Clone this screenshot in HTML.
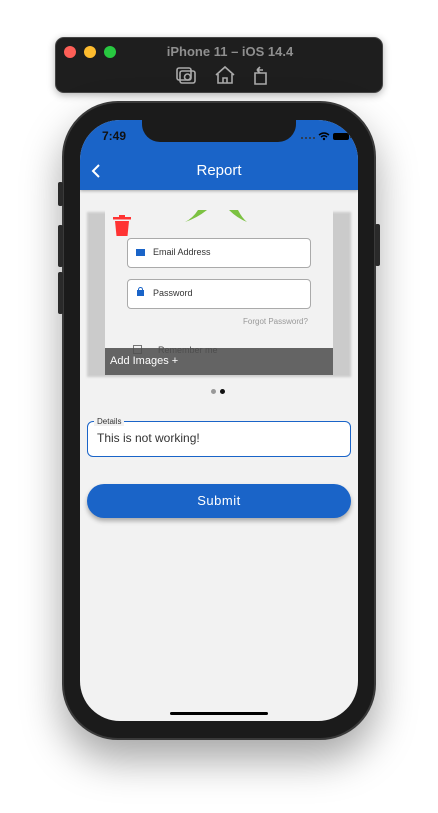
<!DOCTYPE html>
<html><head><style>
*{margin:0;padding:0;box-sizing:border-box}
body{width:438px;height:813px;background:#fff;position:relative;overflow:hidden;font-family:"Liberation Sans",sans-serif}
.abs{position:absolute}
</style></head><body>
<div class="abs" style="left:55px;top:37px;width:328px;height:56px;background:#1e1e1e;border-radius:9px;border:1px solid #444;box-shadow:0 2px 8px rgba(0,0,0,.3)"></div>
<div class="abs" style="left:64px;top:46px;width:12px;height:12px;border-radius:50%;background:#fe5f57"></div>
<div class="abs" style="left:84px;top:46px;width:12px;height:12px;border-radius:50%;background:#febc2e"></div>
<div class="abs" style="left:104px;top:46px;width:12px;height:12px;border-radius:50%;background:#28c840"></div>
<div class="abs" style="left:120px;top:43px;width:220px;text-align:center;color:#8f8f8f;font-size:13px;font-weight:bold;line-height:18px">iPhone 11 – iOS 14.4</div>
<svg class="abs" style="left:175px;top:65px" width="100" height="20" fill="none" stroke="#aaa" stroke-width="1.6">
<rect x="2" y="3" width="14" height="12" rx="2"/><rect x="5" y="6" width="15" height="12" rx="2"/><circle cx="12.5" cy="12" r="3"/>
<path d="M41 10 L50 2 L59 10 M43 9 V18 H57 V9 M48 18 V13 H52 V18"/>
<path d="M80 8 H91 V19 H80 Z M82 5 L85 2 M82 5 L85 8 M82 5 H88"/>
</svg>
<div class="abs" style="left:62px;top:101px;width:314px;height:639px;background:#1b1b1b;border-radius:56px;border:2px solid #3a3a3a;box-shadow:0 20px 40px rgba(0,0,0,.35)"></div>
<div class="abs" style="left:58px;top:182px;width:5px;height:24px;background:#2a2a2a;border-radius:2px"></div>
<div class="abs" style="left:58px;top:225px;width:5px;height:42px;background:#2a2a2a;border-radius:2px"></div>
<div class="abs" style="left:58px;top:272px;width:5px;height:42px;background:#2a2a2a;border-radius:2px"></div>
<div class="abs" style="left:375px;top:224px;width:5px;height:42px;background:#2a2a2a;border-radius:2px"></div>
<div class="abs" style="left:80px;top:120px;width:278px;height:601px;background:#f2f2f2;border-radius:40px;overflow:hidden">
  <div class="abs" style="left:0;top:0;width:278px;height:70px;background:#1a64c8;box-shadow:0 1px 3px rgba(0,0,0,.3)"></div>
  <div class="abs" style="left:62px;top:0;width:154px;height:22px;background:#1b1b1b;border-radius:0 0 18px 18px"></div>
  <div class="abs" style="left:22px;top:9px;font-size:12px;font-weight:bold;color:#111">7:49</div>
  <svg class="abs" style="left:220px;top:11px" width="52" height="10"><g fill="#333"><circle cx="2" cy="7" r="1"/><circle cx="6" cy="7" r="1"/><circle cx="10" cy="7" r="1"/><circle cx="14" cy="7" r="1"/></g>
  <path d="M19 4 Q24 0 29 4 M21 6 Q24 3.5 27 6" stroke="#000" stroke-width="1.5" fill="none"/><circle cx="24" cy="8" r="1.2"/>
  <rect x="33" y="2" width="16" height="7" rx="2" fill="#000"/><rect x="50" y="4" width="1.5" height="3" fill="#333"/></svg>
  <svg class="abs" style="left:11px;top:43px" width="10" height="16"><path d="M8 2 L2 8 L8 14" stroke="#fff" stroke-width="2" fill="none"/></svg>
  <div class="abs" style="left:0;top:42px;width:278px;text-align:center;color:#fff;font-size:15px">Report</div>
  <div class="abs" style="left:7px;top:92px;width:264px;height:165px;background:#cbcbcb;filter:blur(1px)"></div>
  <div class="abs" style="left:25px;top:90px;width:228px;height:165px;background:#f2f2f2;overflow:hidden">
    <svg class="abs" style="left:78px;top:0" width="70" height="14"><path d="M2 12 Q14 8 24 0 L15 0 Q10 8 2 12Z M64 12 Q54 8 46 0 L55 0 Q59 8 64 12Z" fill="#7cc242"/></svg>
    <div class="abs" style="left:22px;top:28px;width:184px;height:30px;background:#fff;border:1px solid #aaa;border-radius:4px"></div>
    <div class="abs" style="left:31px;top:39px;width:9px;height:7px;background:#1a64c8"></div>
    <div class="abs" style="left:48px;top:37px;font-size:9px;color:#333">Email Address</div>
    <div class="abs" style="left:22px;top:69px;width:184px;height:30px;background:#fff;border:1px solid #aaa;border-radius:4px"></div>
    <div class="abs" style="left:32px;top:80px;width:7px;height:6px;background:#1a64c8"></div>
    <div class="abs" style="left:33px;top:77px;width:5px;height:5px;border:1.3px solid #1a64c8;border-bottom:none;border-radius:3px 3px 0 0"></div>
    <div class="abs" style="left:48px;top:78px;font-size:9px;color:#333">Password</div>
    <div class="abs" style="left:138px;top:107px;font-size:8px;color:#999">Forgot Password?</div>
    <div class="abs" style="left:28px;top:135px;width:9px;height:9px;border:1px solid #777"></div>
    <div class="abs" style="left:53px;top:135px;font-size:9px;color:#444">Remember me</div>
    <div class="abs" style="left:0;top:138px;width:228px;height:27px;background:rgba(80,80,80,.88)"></div>
    <div class="abs" style="left:5px;top:145px;font-size:11px;color:#fff">Add Images +</div>
  </div>
  <svg class="abs" style="left:32px;top:94px" width="20" height="23"><rect x="1" y="3" width="18" height="2.5" fill="#f33"/><rect x="7" y="1" width="6" height="2.5" fill="#f33"/><path d="M3 7 H17 L15.5 22 H4.5Z" fill="#f33"/></svg>
  <div class="abs" style="left:131px;top:269px;width:5px;height:5px;border-radius:50%;background:#999"></div>
  <div class="abs" style="left:140px;top:269px;width:5px;height:5px;border-radius:50%;background:#111"></div>
  <div class="abs" style="left:7px;top:301px;width:264px;height:36px;background:#fff;border:1.5px solid #1a64c8;border-radius:6px"></div>
  <div class="abs" style="left:14px;top:297px;padding:0 3px;background:#f2f2f2;font-size:8px;color:#333;line-height:9px">Details</div>
  <div class="abs" style="left:17px;top:311px;font-size:12px;color:#333">This is not working!</div>
  <div class="abs" style="left:7px;top:364px;width:264px;height:34px;background:#1a64c8;border-radius:17px;box-shadow:0 3px 5px rgba(0,0,0,.3);color:#fff;font-size:13px;text-align:center;line-height:34px;letter-spacing:.5px">Submit</div>
  <div class="abs" style="left:90px;top:592px;width:98px;height:3px;background:#000;border-radius:2px"></div>
</div>
</body></html>
